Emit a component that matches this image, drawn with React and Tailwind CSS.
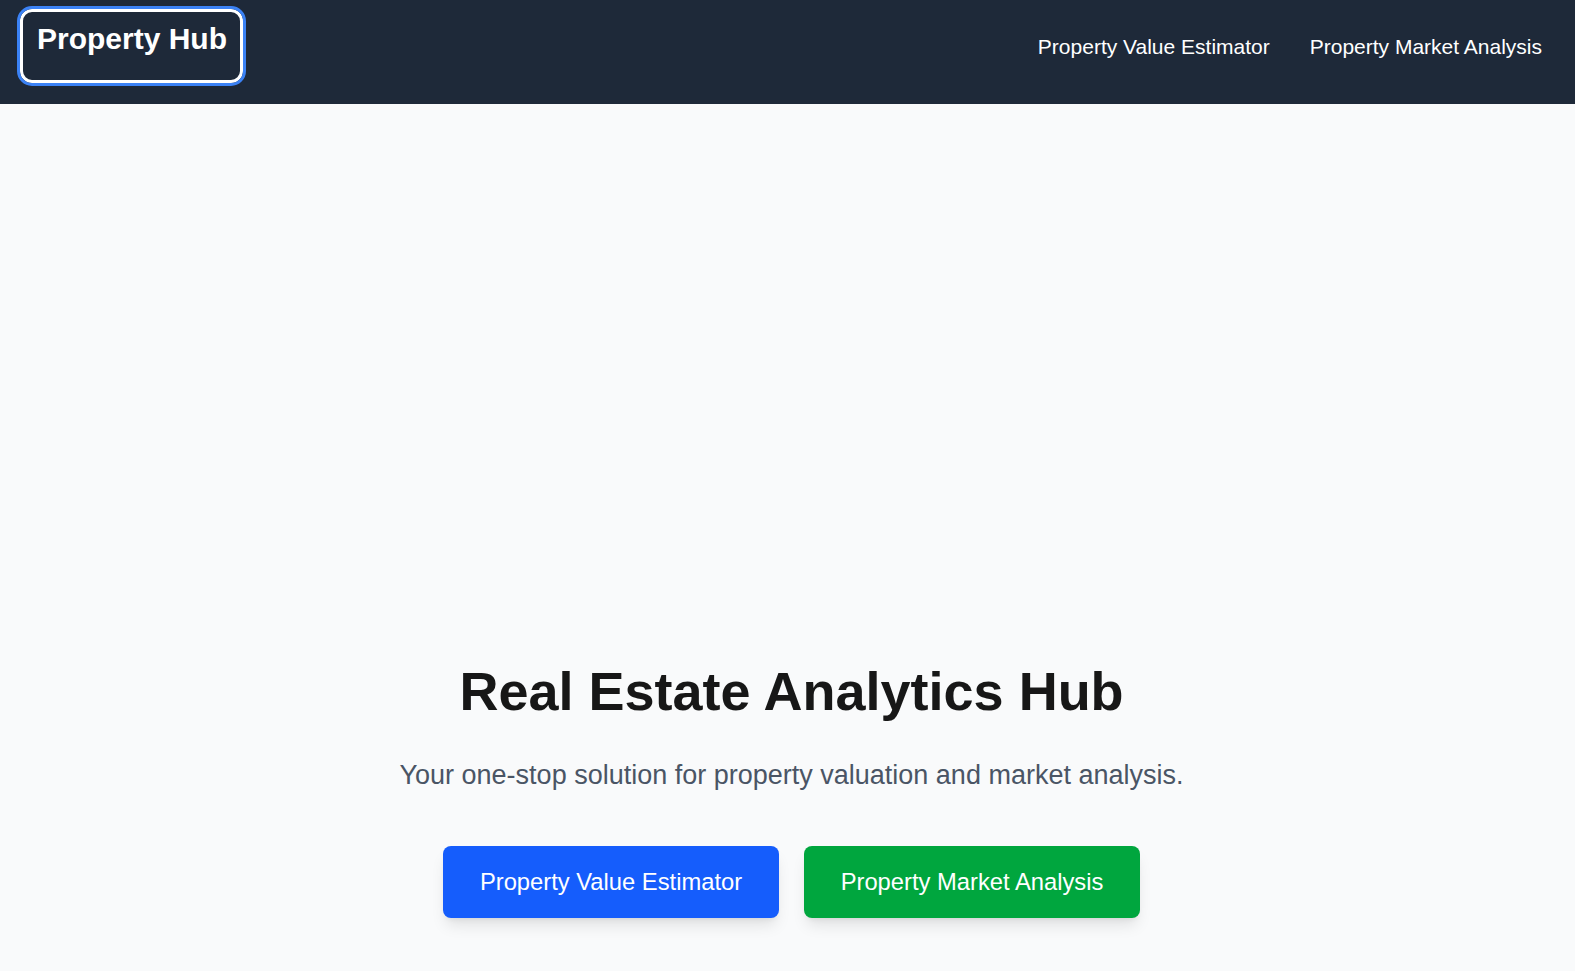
import React from "react";

export default function App() {
  const font = { fontFamily: '"Liberation Sans", Arial, sans-serif' };
  return (
    <div className="min-h-screen bg-[#f9fafb]" style={font}>
      {/* Top bar */}
      <header className="bg-[#1e2939] flex items-center justify-between pl-[20px] pr-[33px] pt-[9px] pb-[21px]">
        <button className="border-[3px] border-white rounded-xl outline-[3px] outline-[#3b82f6] text-white text-[30px] font-bold leading-[36px] pl-[14px] pr-[10px] pt-[9px] pb-[23px] w-[223px] text-left">
          Property Hub
        </button>
        <nav className="flex gap-[40px] text-white text-[21px] leading-[28px] mt-[2px]">
          <a href="#">Property Value Estimator</a>
          <a href="#">Property Market Analysis</a>
        </nav>
      </header>

      {/* Hero */}
      <main className="flex flex-col items-center pl-2 pt-[560px] pb-[53px]">
        <h1 className="text-[54px] font-bold leading-none text-[#171717]">
          Real Estate Analytics Hub
        </h1>
        <p className="mt-[39px] text-[27px] leading-[36px] text-[#4a5565]">
          Your one-stop solution for property valuation and market analysis.
        </p>
        <div className="mt-[53px] flex gap-[25px]">
          <button className="w-[336px] py-5 rounded-lg bg-[#155dfc] text-white text-[23.75px] leading-[32px] shadow-lg">
            Property Value Estimator
          </button>
          <button className="w-[336px] py-5 rounded-lg bg-[#00a63e] text-white text-[23.75px] leading-[32px] shadow-lg">
            Property Market Analysis
          </button>
        </div>
      </main>
    </div>
  );
}
